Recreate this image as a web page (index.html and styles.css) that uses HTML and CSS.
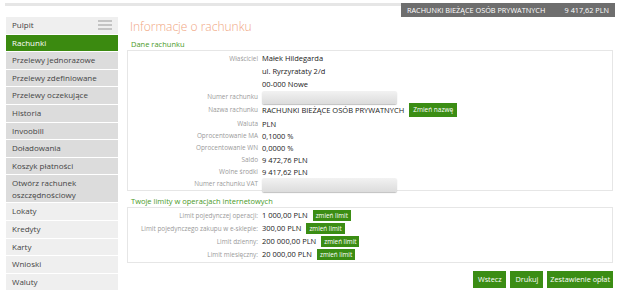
FILE: index.html
```html
<!DOCTYPE html>
<html lang="pl">
<head>
    <meta charset="UTF-8">
    <meta name="viewport" content="width=device-width, initial-scale=1.0">
    <title>Informacje o rachunku</title>
    <link rel="stylesheet" href="styles.css">
</head>
<body>
    <div class="page">
        <div class="topbar">
            <div class="topbar-strip"></div>
            <div class="account-badge">
                <span>RACHUNKI BIEŻĄCE OSÓB PRYWATNYCH</span>
                <span>9 417,62 PLN</span>
            </div>
        </div>

        <div class="layout">
            <nav class="sidebar">
                <a href="#" class="menu-item light home">
                    Pulpit
                    <span class="burger"><i></i><i></i><i></i></span>
                </a>
                <a href="#" class="menu-item active">Rachunki</a>
                <a href="#" class="menu-item">Przelewy jednorazowe</a>
                <a href="#" class="menu-item">Przelewy zdefiniowane</a>
                <a href="#" class="menu-item">Przelewy oczekujące</a>
                <a href="#" class="menu-item">Historia</a>
                <a href="#" class="menu-item">Invoobill</a>
                <a href="#" class="menu-item">Doładowania</a>
                <a href="#" class="menu-item">Koszyk płatności</a>
                <a href="#" class="menu-item tall">Otwórz rachunek oszczędnościowy</a>
                <a href="#" class="menu-item light">Lokaty</a>
                <a href="#" class="menu-item light">Kredyty</a>
                <a href="#" class="menu-item light">Karty</a>
                <a href="#" class="menu-item light">Wnioski</a>
                <a href="#" class="menu-item light">Waluty</a>
            </nav>

            <main class="content">
                <h1 class="page-title">Informacje o rachunku</h1>

                <h2 class="section-title">Dane rachunku</h2>
                <div class="panel details">
                    <div class="label owner-label">Właściciel</div>
                    <div class="value owner">
                        <div>Małek Hildegarda</div>
                        <div>ul. Ryrzyrataty 2/d</div>
                        <div>00-000 Nowe</div>
                    </div>

                    <div class="label">Numer rachunku</div>
                    <div class="value"><span class="masked"></span></div>

                    <div class="label">Nazwa rachunku</div>
                    <div class="value name-row">
                        RACHUNKI BIEŻĄCE OSÓB PRYWATNYCH
                        <button type="button" class="btn btn-small">Zmień nazwę</button>
                    </div>

                    <div class="label gap-top">Waluta</div>
                    <div class="value gap-top">PLN</div>

                    <div class="label">Oprocentowanie MA</div>
                    <div class="value">0,1000 %</div>

                    <div class="label">Oprocentowanie WN</div>
                    <div class="value">0,0000 %</div>

                    <div class="label">Saldo</div>
                    <div class="value">9 472,76 PLN</div>

                    <div class="label">Wolne środki</div>
                    <div class="value">9 417,62 PLN</div>

                    <div class="label">Numer rachunku VAT</div>
                    <div class="value"><span class="masked vat"></span></div>
                </div>

                <h2 class="section-title">Twoje limity w operacjach internetowych</h2>
                <div class="panel limits">
                    <div class="label">Limit pojedynczej operacji:</div>
                    <div class="value">1 000,00 PLN <button type="button" class="btn btn-tiny">zmień limit</button></div>

                    <div class="label">Limit pojedynczego zakupu w e-sklepie:</div>
                    <div class="value">300,00 PLN <button type="button" class="btn btn-tiny">zmień limit</button></div>

                    <div class="label">Limit dzienny:</div>
                    <div class="value">200 000,00 PLN <button type="button" class="btn btn-tiny">zmień limit</button></div>

                    <div class="label">Limit miesięczny:</div>
                    <div class="value">20 000,00 PLN <button type="button" class="btn btn-tiny">zmień limit</button></div>
                </div>

                <div class="actions">
                    <button type="button" class="btn">Wstecz</button>
                    <button type="button" class="btn">Drukuj</button>
                    <button type="button" class="btn">Zestawienie opłat</button>
                </div>
            </main>
        </div>
    </div>
</body>
</html>
```

FILE: styles.css
```css
* {
    margin: 0;
    padding: 0;
    box-sizing: border-box;
    font-family: 'Open Sans', 'Noto Sans', sans-serif;
}

body {
    background-color: #fff;
    color: #222;
}

.page {
    padding: 3px 2px 0 5px;
}

/* top bar */
.topbar {
    display: flex;
    align-items: flex-start;
}

.topbar-strip {
    flex: 1;
    height: 3px;
    background-color: #e6e6e6;
}

.account-badge {
    display: flex;
    justify-content: space-between;
    width: 214px;
    height: 14px;
    padding: 0 6px;
    background-color: #6e6e6e;
    color: #fff;
    font-size: 7.3px;
    line-height: 14px;
}

/* layout */
.layout {
    display: flex;
    align-items: flex-start;
}

.sidebar {
    width: 112px;
    margin-left: 1px;
    display: flex;
    flex-direction: column;
}

.menu-item {
    display: block;
    padding: 0 6px;
    line-height: 16.6px;
    font-size: 8px;
    color: #444;
    text-decoration: none;
    background-color: #dcdcdc;
    border-bottom: 1px solid #fff;
}

.menu-item.light {
    background-color: #efefef;
}

.menu-item.active {
    background-color: #3b8a10;
    color: #fff;
}

.menu-item.tall {
    line-height: 12px;
    padding: 1.5px 6px;
}

.menu-item.home {
    display: flex;
    justify-content: space-between;
    align-items: center;
}

.burger {
    display: flex;
    flex-direction: column;
    gap: 2px;
    width: 14px;
}

.burger i {
    display: block;
    height: 2px;
    background-color: #c4c4c4;
}

/* content */
.content {
    flex: 1;
    margin: 0 2px 0 9px;
}

.page-title {
    margin: 1px 0 0 3px;
    font-size: 12px;
    font-weight: 300;
    line-height: 17px;
    color: #f0a57f;
}

.section-title {
    margin: 4px 0 0 4px;
    font-size: 7.5px;
    font-weight: 400;
    line-height: 11px;
    color: #4a9a28;
}

.panel {
    display: grid;
    grid-template-columns: 130px 1fr;
    column-gap: 4px;
    border: 1px solid #e6e6e6;
    align-items: center;
}

.details {
    padding: 1px 0 0;
    height: 141px;
    align-content: start;
}

.limits {
    padding: 1px 0;
    height: 56px;
    align-content: start;
}

.details + .section-title {
    margin-top: 5px;
}

.label {
    text-align: right;
    font-size: 6.4px;
    color: #9a9a9a;
    line-height: 12px;
}

.value {
    font-size: 7.5px;
    color: #222;
    line-height: 12px;
    height: 12px;
    display: flex;
    align-items: center;
    gap: 3px;
}

.owner-label {
    align-self: start;
    line-height: 13px;
}

.value.owner {
    display: block;
    height: auto;
    line-height: 13px;
}

.masked {
    display: block;
    width: 135px;
    height: 13px;
    border-radius: 2px;
    background: linear-gradient(to bottom, #f2f2f2, #dcdcdc);
    box-shadow: 0 1px 1px rgba(0, 0, 0, 0.25);
}

.masked.vat {
    height: 14px;
    margin-top: 1px;
}

.name-row {
    height: 14px;
}

.gap-top {
    margin-top: 1px;
}

.limits .label,
.limits .value {
    line-height: 13px;
    height: 13px;
}

.limits .value {
    gap: 5px;
}

.btn {
    min-width: 33px;
    border: none;
    background-color: #3b8d14;
    color: #fff;
    font-size: 7.3px;
    line-height: 17px;
    height: 17px;
    padding: 0 3px;
    cursor: pointer;
}

.btn-small {
    min-width: 0;
    height: 14px;
    line-height: 14px;
    font-size: 6.5px;
    padding: 0 4px;
    margin-left: 2px;
}

.btn-tiny {
    min-width: 0;
    height: 11px;
    line-height: 11px;
    font-size: 6.3px;
    padding: 0 3px;
}

.actions {
    display: flex;
    justify-content: flex-end;
    gap: 4px;
    margin-top: 8px;
}
```
